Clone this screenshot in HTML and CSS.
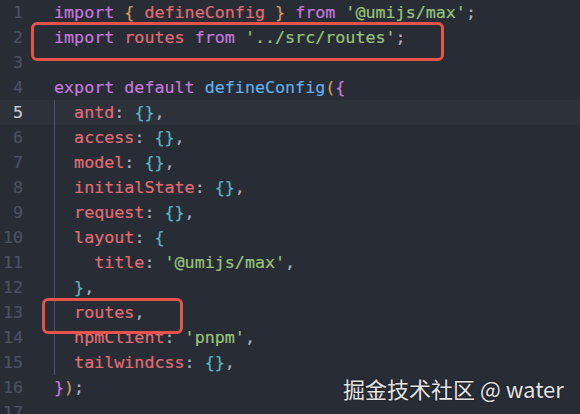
FILE: index.html
```html
<!DOCTYPE html>
<html>
<head>
<meta charset="utf-8">
<link rel="stylesheet" href="styles.css">
</head>
<body>
<div class="editor">
<div class="line"><span class="ln">1</span><span class="code"><span class="k">import</span> <span class="o">{</span> <span class="v">defineConfig</span> <span class="o">}</span> <span class="k">from</span> <span class="s">'@umijs/max'</span><span class="p">;</span></span></div>
<div class="line"><span class="ln">2</span><span class="code"><span class="k">import</span> <span class="v">routes</span> <span class="k">from</span> <span class="s">'../src/routes'</span><span class="p">;</span></span></div>
<div class="line"><span class="ln">3</span><span class="code"></span></div>
<div class="line"><span class="ln">4</span><span class="code"><span class="k">export</span> <span class="k">default</span> <span class="f">defineConfig</span><span class="o">(</span><span class="k">{</span></span></div>
<div class="line active"><span class="ln">5</span><span class="code guide">  <span class="v">antd</span><span class="p">:</span> <span class="c">{}</span><span class="p">,</span></span></div>
<div class="line"><span class="ln">6</span><span class="code guide">  <span class="v">access</span><span class="p">:</span> <span class="c">{}</span><span class="p">,</span></span></div>
<div class="line"><span class="ln">7</span><span class="code guide">  <span class="v">model</span><span class="p">:</span> <span class="c">{}</span><span class="p">,</span></span></div>
<div class="line"><span class="ln">8</span><span class="code guide">  <span class="v">initialState</span><span class="p">:</span> <span class="c">{}</span><span class="p">,</span></span></div>
<div class="line"><span class="ln">9</span><span class="code guide">  <span class="v">request</span><span class="p">:</span> <span class="c">{}</span><span class="p">,</span></span></div>
<div class="line"><span class="ln">10</span><span class="code guide">  <span class="v">layout</span><span class="p">:</span> <span class="c">{</span></span></div>
<div class="line"><span class="ln">11</span><span class="code guide">    <span class="v">title</span><span class="p">:</span> <span class="s">'@umijs/max'</span><span class="p">,</span></span></div>
<div class="line"><span class="ln">12</span><span class="code guide">  <span class="c">}</span><span class="p">,</span></span></div>
<div class="line"><span class="ln">13</span><span class="code guide">  <span class="v">routes</span><span class="p">,</span></span></div>
<div class="line"><span class="ln">14</span><span class="code guide">  <span class="v">npmClient</span><span class="p">:</span> <span class="s">'pnpm'</span><span class="p">,</span></span></div>
<div class="line"><span class="ln">15</span><span class="code guide">  <span class="v">tailwindcss</span><span class="p">:</span> <span class="c">{}</span><span class="p">,</span></span></div>
<div class="line"><span class="ln">16</span><span class="code"><span class="k">}</span><span class="o">)</span><span class="p">;</span></span></div>
<div class="line"><span class="ln">17</span><span class="code"></span></div>
<div class="box box1"></div>
<div class="box box2"></div>
<div class="mark">掘金技术社区 @ water</div>
</div>
</body>
</html>
```
FILE: styles.css
```css
html, body {
  margin: 0;
  padding: 0;
  background: #282c34;
  overflow: hidden;
}
.editor {
  position: relative;
  width: 580px;
  height: 414px;
  font-family: "DejaVu Sans Mono", "Liberation Mono", monospace;
  font-size: 16.7px;
  color: #abb2bf;
  -webkit-text-stroke: 0.2px currentColor;
}
.line {
  display: flex;
  height: 25px;
  line-height: 25px;
  white-space: pre;
}
.line.active {
  background: #2c313a;
}
.ln {
  width: 23px;
  text-align: right;
  color: #4b5263;
  flex: none;
}
.active .ln {
  color: #c8ccd4;
}
.code {
  padding-left: 31px;
  flex: 1;
}
.guide {
  background: linear-gradient(#4b5263, #4b5263) 31px 0 / 1px 100% no-repeat;
}
.k { color: #c678dd; }
.v { color: #e06c75; }
.s { color: #98c379; }
.f { color: #61afef; }
.o { color: #d19a66; }
.c { color: #56b6c2; }
.p { color: #abb2bf; }
.box {
  position: absolute;
  border: 3px solid #e5534b;
  border-radius: 6px;
  box-sizing: border-box;
}
.box1 {
  left: 31px;
  top: 22px;
  width: 413px;
  height: 39px;
}
.box2 {
  left: 42px;
  top: 298px;
  width: 141px;
  height: 36px;
}
.mark {
  position: absolute;
  left: 343px;
  top: 373px;
  font-family: "Noto Sans CJK SC", "Noto Sans", sans-serif;
  font-size: 22px;
  line-height: 30px;
  color: #e4e4e4;
  -webkit-text-stroke: 0;
  text-shadow: 0 0 2px rgba(0,0,0,0.5);
  white-space: nowrap;
}
```
